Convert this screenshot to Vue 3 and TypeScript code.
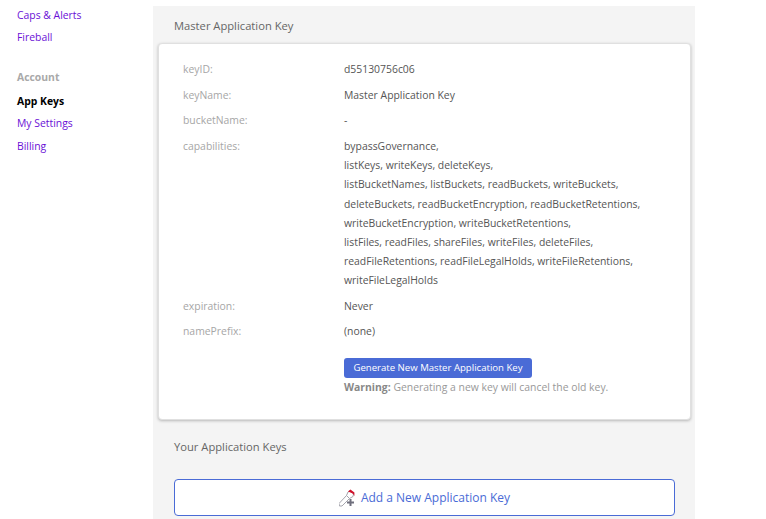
<script setup lang="ts">
interface Row { label: string; lines: string[] }
const rows: Row[] = [
  { label: 'keyID:', lines: ['d55130756c06'] },
  { label: 'keyName:', lines: ['Master Application Key'] },
  { label: 'bucketName:', lines: ['-'] },
  {
    label: 'capabilities:',
    lines: [
      'bypassGovernance,',
      'listKeys, writeKeys, deleteKeys,',
      'listBucketNames, listBuckets, readBuckets, writeBuckets,',
      'deleteBuckets, readBucketEncryption, readBucketRetentions,',
      'writeBucketEncryption, writeBucketRetentions,',
      'listFiles, readFiles, shareFiles, writeFiles, deleteFiles,',
      'readFileRetentions, readFileLegalHolds, writeFileRetentions,',
      'writeFileLegalHolds',
    ],
  },
  { label: 'expiration:', lines: ['Never'] },
  { label: 'namePrefix:', lines: ['(none)'] },
]
</script>

<template>
  <div class="page">
    <aside class="side">
      <a class="link first">Caps &amp; Alerts</a>
      <a class="link">Fireball</a>
      <div class="group">Account</div>
      <a class="link current">App Keys</a>
      <a class="link">My Settings</a>
      <a class="link">Billing</a>
    </aside>
    <main class="panel">
      <h2 class="title">Master Application Key</h2>
      <section class="card">
        <div v-for="r in rows" :key="r.label" class="row">
          <div class="label">{{ r.label }}</div>
          <div class="value">
            <div v-for="l in r.lines" :key="l">{{ l }}</div>
          </div>
        </div>
        <div class="actions">
          <button class="gen" type="button">Generate New Master Application Key</button>
          <div class="warn"><b>Warning:</b> Generating a new key will cancel the old key.</div>
        </div>
      </section>
      <h2 class="title second">Your Application Keys</h2>
      <button class="add" type="button">
        <svg class="ico" width="18" height="18" viewBox="1 0 18 18">
          <path d="M1 14.5 L8.5 6.5 L11.5 9.5 L4 17 L1.5 17 Z" fill="#fff" stroke="#a5a5ad" stroke-width="1"/>
          <path d="M8.5 6.5 L10 3 L12 2 L15.5 5 L15 7.5 L11.5 9.5 Z" fill="#fff" stroke="#a5a5ad" stroke-width="1"/>
          <path d="M10 2.4 L12.4 0.6 L16.4 3.6 L16.4 7 L14.8 4.6 Z" fill="#d0112b"/>
          <path d="M12.5 10v7M9 13.5h7" stroke="#6f6f7d" stroke-width="2" fill="none"/>
        </svg>
        <span>Add a New Application Key</span>
      </button>
    </main>
  </div>
</template>

<style>
html, body { margin: 0; background: #fff; overflow: hidden; }
</style>

<style scoped>
.page {
  display: flex;
  height: 519px;
  overflow: hidden;
  font-family: "Open Sans", sans-serif;
  font-size: 10.4px;
  line-height: 19.2px;
}
.side {
  width: 153px;
  flex: none;
  padding: 6px 0 0 17px;
  box-sizing: border-box;
  display: flex;
  flex-direction: column;
}
.link { color: #6a0fd6; height: 22.4px; }
.group { color: #a9a9a9; font-weight: 700; margin-top: 17px; height: 24px; }
.current { color: #000; font-weight: 700; }
.panel {
  width: 542px;
  flex: none;
  margin-top: 6px;
  background: #f4f4f4;
  padding: 10px 4px 0 5px;
  box-sizing: border-box;
}
.title {
  margin: 0 0 0 16px;
  font-size: 11.2px;
  font-weight: 400;
  color: #666;
  line-height: 20px;
}
.card {
  margin-top: 7px;
  background: #fff;
  border: 1px solid #e0e0e0;
  border-radius: 4px;
  box-shadow: 0 1px 3px rgba(0, 0, 0, 0.25);
  padding: 16.35px 24px 23px;
  height: 377px;
  box-sizing: border-box;
}
.row { display: flex; margin-bottom: 6.33px; }
.label { width: 161px; color: #a6a6a6; flex: none; }
.value { color: #555; white-space: nowrap; }
.actions { margin: 16px 0 0 161px; }
.gen {
  display: block;
  width: 188px;
  height: 20px;
  padding: 0;
  border: 0;
  border-radius: 3px;
  background: #4a6bd6;
  color: #fff;
  font: 400 9.6px/20px "Open Sans", sans-serif;
}
.warn { color: #999; }
.warn b { color: #888; }
.second { margin-top: 17px; }
.add {
  display: flex;
  align-items: center;
  justify-content: center;
  gap: 4px;
  width: 501px;
  height: 37px;
  margin: 22px 0 0 16px;
  background: #fff;
  border: 1px solid #4a6bd6;
  border-radius: 4px;
  color: #4a6bd6;
  font: 400 12px "Open Sans", sans-serif;
  padding: 0;
}
.ico { flex: none; }
</style>
